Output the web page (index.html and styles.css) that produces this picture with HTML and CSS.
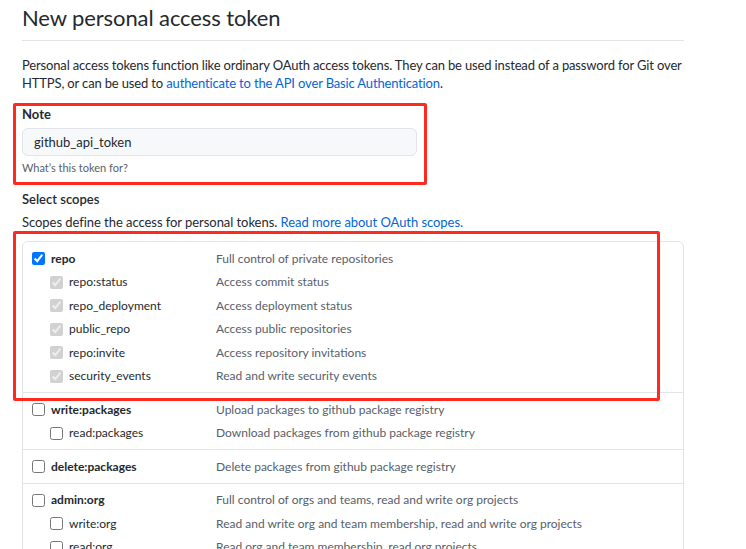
FILE: index.html
```html
<!DOCTYPE html>
<html lang="en">
<head>
<meta charset="utf-8">
<title>New personal access token</title>
<link rel="stylesheet" href="styles.css">
</head>
<body>
<div class="page">
  <h1 class="title">New personal access token</h1>
  <p class="intro">Personal access tokens function like ordinary OAuth access tokens. They can be used instead of a password for Git over HTTPS, or can be used to <a class="link" href="#">authenticate to the API over Basic Authentication</a>.</p>

  <div class="field">
    <label class="field-label" for="note">Note</label>
    <div class="input" id="note">github_api_token</div>
    <p class="hint">What’s this token for?</p>
  </div>

  <div class="scopes-head">Select scopes</div>
  <p class="scopes-desc">Scopes define the access for personal tokens. <a class="link" href="#">Read more about OAuth scopes.</a></p>

  <div class="scope-box">
    <div class="group">
      <div class="row parent"><span class="name"><input type="checkbox" checked><span>repo</span></span><span class="desc">Full control of private repositories</span></div>
      <div class="row child"><span class="name"><input type="checkbox" checked disabled><span>repo:status</span></span><span class="desc">Access commit status</span></div>
      <div class="row child"><span class="name"><input type="checkbox" checked disabled><span>repo_deployment</span></span><span class="desc">Access deployment status</span></div>
      <div class="row child"><span class="name"><input type="checkbox" checked disabled><span>public_repo</span></span><span class="desc">Access public repositories</span></div>
      <div class="row child"><span class="name"><input type="checkbox" checked disabled><span>repo:invite</span></span><span class="desc">Access repository invitations</span></div>
      <div class="row child"><span class="name"><input type="checkbox" checked disabled><span>security_events</span></span><span class="desc">Read and write security events</span></div>
    </div>
    <div class="group">
      <div class="row parent"><span class="name"><input type="checkbox"><span>write:packages</span></span><span class="desc">Upload packages to github package registry</span></div>
      <div class="row child"><span class="name"><input type="checkbox"><span>read:packages</span></span><span class="desc">Download packages from github package registry</span></div>
    </div>
    <div class="group">
      <div class="row parent"><span class="name"><input type="checkbox"><span>delete:packages</span></span><span class="desc">Delete packages from github package registry</span></div>
    </div>
    <div class="group">
      <div class="row parent"><span class="name"><input type="checkbox"><span>admin:org</span></span><span class="desc">Full control of orgs and teams, read and write org projects</span></div>
      <div class="row child"><span class="name"><input type="checkbox"><span>write:org</span></span><span class="desc">Read and write org and team membership, read and write org projects</span></div>
      <div class="row child"><span class="name"><input type="checkbox"><span>read:org</span></span><span class="desc">Read org and team membership, read org projects</span></div>
    </div>
  </div>
</div>
<div class="mark mark-note"></div>
<div class="mark mark-repo"></div>
</body>
</html>
```

FILE: styles.css
```css
html { overflow: hidden; }
body {
  margin: 0;
  font-family: Lato, "Noto Sans", sans-serif;
  font-size: 13px;
  line-height: 18px;
  color: #24292e;
  background: #fff;
}
.page {
  width: 662px;
  padding-left: 22px;
}
.title {
  margin: 0;
  padding: 5px 0 9px;
  font-size: 22px;
  line-height: 26px;
  font-weight: 400;
  letter-spacing: -0.1px;
  border-bottom: 1px solid #e1e4e8;
}
.intro {
  margin: 15px 0 0;
  letter-spacing: -0.15px;
}
.link {
  color: #0366d6;
  text-decoration: none;
}
.field {
  margin-top: 13px;
}
.field-label {
  display: block;
  font-weight: 700;
}
.input {
  margin-top: 5px;
  width: 371px;
  height: 26px;
  padding: 0 11px;
  border: 1px solid #e1e4e8;
  border-radius: 6px;
  background: #f6f8fa;
  line-height: 26px;
  font-size: 13px;
}
.hint {
  margin: 4px 0 0;
  font-size: 11px;
  line-height: 16px;
  color: #586069;
}
.scopes-head {
  margin-top: 14px;
  font-weight: 600;
}
.scopes-desc {
  margin: 5px 0 0;
  letter-spacing: -0.05px;
}
.scope-box {
  margin-top: 10px;
  border: 1px solid #e1e4e8;
  border-radius: 6px;
}
.group {
  padding: 5px 0 4px;
}
.group + .group {
  border-top: 1px solid #e1e4e8;
}
.row {
  display: grid;
  grid-template-columns: 184px 1fr;
  align-items: center;
  height: 23.5px;
  padding-left: 9px;
  font-size: 12px;
}
.name {
  display: flex;
  align-items: center;
  gap: 6px;
}
.name input {
  margin: 0;
  width: 13px;
  height: 13px;
}
.parent .name {
  font-weight: 700;
}
.child .name {
  padding-left: 18px;
}
.desc {
  color: #586069;
}
.mark {
  position: absolute;
  border: 3px solid #ff2a1f;
  border-radius: 2px;
  box-sizing: border-box;
}
.mark-note {
  left: 13px;
  top: 103px;
  width: 414px;
  height: 82px;
}
.mark-repo {
  left: 13px;
  top: 231px;
  width: 647px;
  height: 170px;
}
```
